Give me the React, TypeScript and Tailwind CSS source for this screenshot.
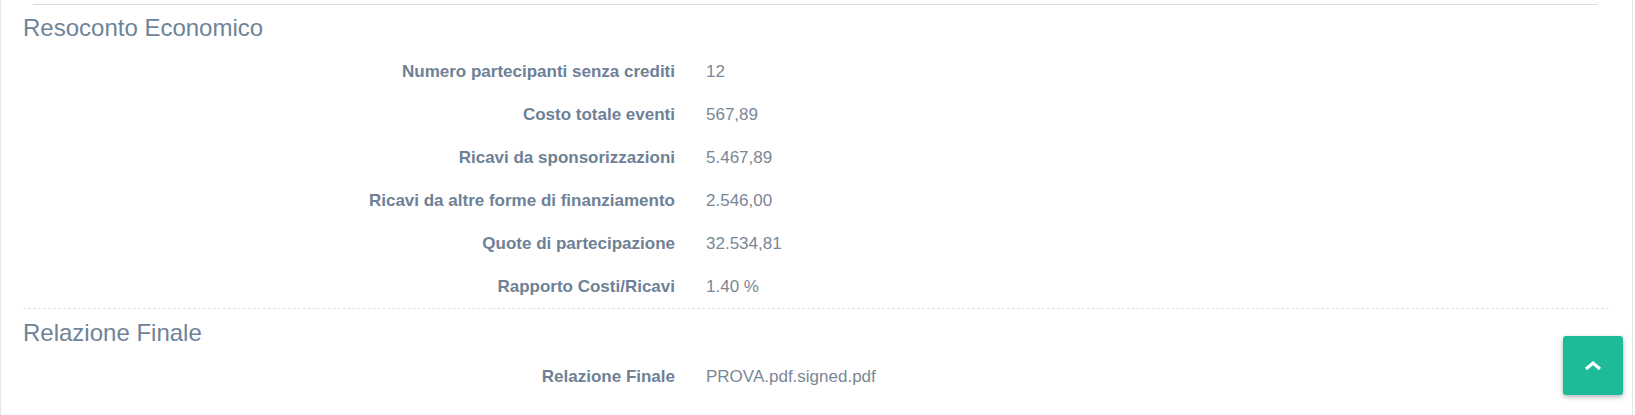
import React from "react";

const rows1: [string, string][] = [
  ["Numero partecipanti senza crediti", "12"],
  ["Costo totale eventi", "567,89"],
  ["Ricavi da sponsorizzazioni", "5.467,89"],
  ["Ricavi da altre forme di finanziamento", "2.546,00"],
  ["Quote di partecipazione", "32.534,81"],
  ["Rapporto Costi/Ricavi", "1.40 %"],
];

function Row({ label, value }: { label: string; value: string }) {
  return (
    <div className="flex items-center h-[43px]">
      <div className="w-[674px] shrink-0 text-right font-bold text-[17px] text-[#6e8196] whitespace-nowrap">{label}</div>
      <div className="pl-[31px] text-[17px] text-[#7a8795] whitespace-nowrap">{value}</div>
    </div>
  );
}

export default function App() {
  return (
    <div
      className="relative w-[1635px] h-[415px] bg-white overflow-hidden"
      style={{ fontFamily: '"Liberation Sans", Arial, sans-serif' }}
    >
      <div className="w-[1633px] h-full border-l border-r border-[#e6e6e6]">
        <div className="pt-[4px] pl-[32px] pr-[34px]">
          <div className="border-t border-[#dcdcdc]" />
        </div>
        <div className="pl-[22px] pt-[8px] pb-[7px]">
          <h2 className="text-[24px] leading-[30px] text-[#6f8398] font-normal">Resoconto Economico</h2>
        </div>
        {rows1.map(([l, v]) => (
          <Row key={l} label={l} value={v} />
        ))}
        <div className="ml-[22px] mr-[23px] border-t border-dashed border-[#e3e3e3]" />
        <div className="pl-[22px] pt-[9px] pb-[7px]">
          <h2 className="text-[24px] leading-[30px] text-[#6f8398] font-normal">Relazione Finale</h2>
        </div>
        <Row label="Relazione Finale" value="PROVA.pdf.signed.pdf" />
      </div>
      <button className="absolute left-[1563px] top-[336px] w-[60px] h-[59px] rounded-[3px] bg-[#1dbb97] shadow-[0_2px_5px_rgba(0,0,0,0.3)] flex items-center justify-center">
        <svg width="18" height="11" viewBox="0 0 18 11">
          <path d="M2 9 L9 3 L16 9" fill="none" stroke="white" strokeWidth="3.2" />
        </svg>
      </button>
    </div>
  );
}
